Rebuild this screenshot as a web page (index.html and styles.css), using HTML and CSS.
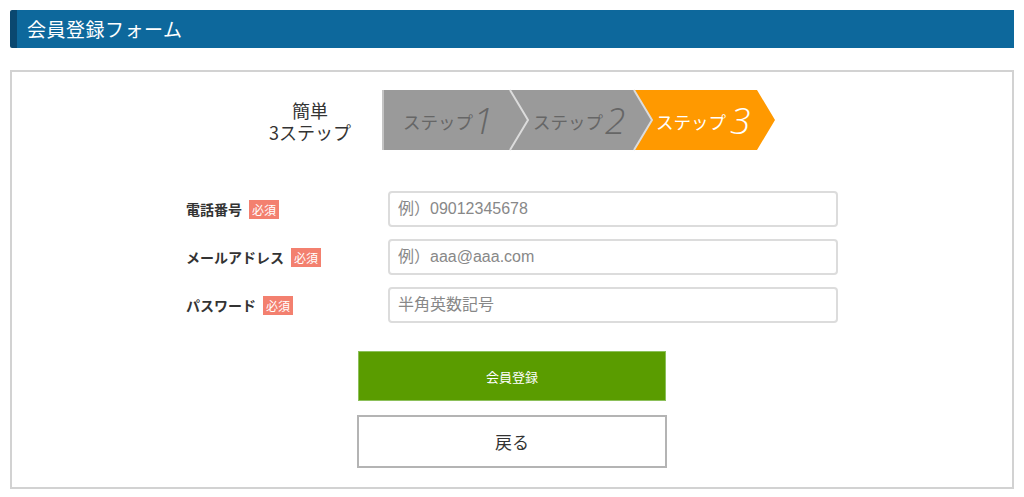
FILE: index.html
```html
<!DOCTYPE html>
<html lang="ja">
<head>
<meta charset="utf-8">
<title>会員登録フォーム</title>
<link rel="stylesheet" href="styles.css">
</head>
<body>
<div class="page">
  <h1 class="header">会員登録フォーム</h1>
  <div class="box">
    <div class="steps">
      <div class="steps-label"><span class="sl-line">簡単</span><span class="sl-line">3ステップ</span></div>
      <svg class="steps-bar" width="394" height="62" viewBox="0 0 394 62">
        <polygon points="1,1 129,1 147,31 129,61 1,61" fill="#9a9a9a"/>
        <polygon points="128,1 253,1 270,31 253,61 128,61 146,31" fill="#9a9a9a"/>
        <polyline points="128,1 146,31 128,61" fill="none" stroke="#dcdcdc" stroke-width="2"/>
        <polygon points="252,1 375,1 393,31 375,61 252,61 270,31" fill="#ff9900"/>
        <polyline points="252,1 270,31 252,61" fill="none" stroke="#dcdcdc" stroke-width="2"/>
        <line x1="1" y1="1" x2="1" y2="61" stroke="#c4c4c4" stroke-width="2"/>
        <text x="21" y="40" class="st-txt" fill="#666">ステップ</text>
        <text x="91" y="45" class="st-num" fill="#666">1</text>
        <text x="151" y="40" class="st-txt" fill="#666">ステップ</text>
        <text x="223" y="45" class="st-num" fill="#666">2</text>
        <text x="274" y="40" class="st-txt" fill="#fff">ステップ</text>
        <text x="348" y="45" class="st-num" fill="#fff">3</text>
      </svg>
    </div>

    <form class="form">
      <div class="row">
        <label class="label">電話番号<span class="req">必須</span></label>
        <input class="input" type="text" placeholder="例）09012345678">
      </div>
      <div class="row">
        <label class="label">メールアドレス<span class="req">必須</span></label>
        <input class="input" type="text" placeholder="例）aaa@aaa.com">
      </div>
      <div class="row">
        <label class="label">パスワード<span class="req">必須</span></label>
        <input class="input" type="password" placeholder="半角英数記号">
      </div>
      <div class="buttons">
        <button type="button" class="btn-submit">会員登録</button>
        <button type="button" class="btn-back">戻る</button>
      </div>
    </form>
  </div>
</div>
</body>
</html>
```

FILE: styles.css
```css
* { box-sizing: border-box; }
html, body { margin: 0; padding: 0; background: #fff; }
body {
  font-family: "Noto Sans CJK JP", "Noto Sans", sans-serif;
  color: #333;
}
.page { padding: 10px 10px 0 10px; }

.header {
  margin: 0;
  height: 38px;
  background: #0d689c;
  border-left: 7px solid #0a4870;
  border-radius: 2px 0 0 2px;
  color: #fff;
  font-size: 19px;
  font-weight: 400;
  line-height: 38px;
  padding-left: 10px;
  letter-spacing: 0.5px;
}

.box {
  margin-top: 22px;
  height: 419px;
  border: 2px solid #d2d2d2;
  padding-top: 17px;
}

.steps {
  display: flex;
  justify-content: center;
  align-items: center;
  gap: 26px;
  padding-left: 16px;
}
.steps-label {
  width: 92px;
  display: flex;
  flex-direction: column;
  align-items: center;
  gap: 1px;
  font-size: 18px;
  color: #333;
  padding-top: 2px;
}
.sl-line { display: block; line-height: 21px; height: 21px; }
.steps-bar { display: block; }
.st-txt {
  font-family: "Noto Sans CJK JP", sans-serif;
  font-size: 17.5px;
}
.st-num {
  font-family: "Open Sans", "Lato", sans-serif;
  font-style: italic;
  font-weight: 300;
  font-size: 37px;
}

.form {
  width: 652px;
  margin: 40px auto 0 auto;
}
.row {
  display: flex;
  align-items: center;
  height: 36px;
  margin-bottom: 12px;
}
.label {
  width: 202px;
  font-size: 14px;
  font-weight: 700;
  color: #333;
  display: flex;
  align-items: center;
}
.req {
  display: inline-block;
  margin-left: 7px;
  background: #f3806f;
  color: #fff;
  font-size: 12px;
  font-weight: 400;
  line-height: 19px;
  height: 19px;
  padding: 0 3px;
}
.input {
  width: 450px;
  height: 36px;
  border: 2px solid #dcdcdc;
  border-radius: 4px;
  padding: 0 8px;
  font-family: "Liberation Sans", "Noto Sans CJK JP", sans-serif;
  font-size: 16px;
  color: #333;
  background: #fff;
}
.input::placeholder { color: #888; }

.buttons {
  display: flex;
  flex-direction: column;
  align-items: center;
  gap: 14px;
  margin-top: 28px;
}
.btn-submit {
  width: 308px;
  height: 50px;
  background: #5a9c00;
  border: 1px solid #8cc05a;
  color: #fff;
  font-family: "Noto Sans CJK JP", sans-serif;
  font-size: 13px;
  cursor: pointer;
}
.btn-back {
  width: 310px;
  height: 53px;
  background: #fff;
  border: 2px solid #b4b4b4;
  color: #333;
  font-family: "Noto Sans CJK JP", sans-serif;
  font-size: 17px;
  cursor: pointer;
}
```
